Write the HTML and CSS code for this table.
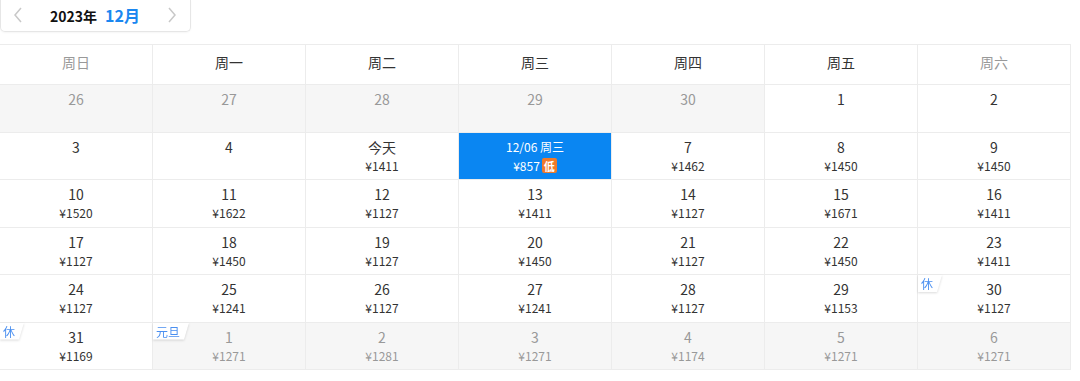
FILE: index.html
```html
<!DOCTYPE html>
<html lang="zh-CN">
<head>
<meta charset="utf-8">
<link rel="stylesheet" href="styles.css">
</head>
<body>
<div class="month-bar">
  <span class="nav"><svg width="10" height="16" viewBox="0 0 10 16"><polyline points="8,1 2,8 8,15" fill="none" stroke="#c8c8c8" stroke-width="1.5"/></svg></span>
  <span class="title"><span class="year">2023年</span><span class="month">12月</span></span>
  <span class="nav"><svg width="10" height="16" viewBox="0 0 10 16"><polyline points="2,1 8,8 2,15" fill="none" stroke="#c8c8c8" stroke-width="1.5"/></svg></span>
</div>

<div class="cal">
  <div class="wk weekend">周日</div>
  <div class="wk">周一</div>
  <div class="wk">周二</div>
  <div class="wk">周三</div>
  <div class="wk">周四</div>
  <div class="wk">周五</div>
  <div class="wk weekend">周六</div>

  <div class="cell off"><span class="d">26</span></div>
  <div class="cell off"><span class="d">27</span></div>
  <div class="cell off"><span class="d">28</span></div>
  <div class="cell off"><span class="d">29</span></div>
  <div class="cell off"><span class="d">30</span></div>
  <div class="cell"><span class="d">1</span></div>
  <div class="cell"><span class="d">2</span></div>

  <div class="cell"><span class="d">3</span></div>
  <div class="cell"><span class="d">4</span></div>
  <div class="cell"><span class="d">今天</span><span class="p">¥1411</span></div>
  <div class="cell sel"><span class="d">12/06 周三</span><span class="p">¥857<span class="low">低</span></span></div>
  <div class="cell"><span class="d">7</span><span class="p">¥1462</span></div>
  <div class="cell"><span class="d">8</span><span class="p">¥1450</span></div>
  <div class="cell"><span class="d">9</span><span class="p">¥1450</span></div>

  <div class="cell"><span class="d">10</span><span class="p">¥1520</span></div>
  <div class="cell"><span class="d">11</span><span class="p">¥1622</span></div>
  <div class="cell"><span class="d">12</span><span class="p">¥1127</span></div>
  <div class="cell"><span class="d">13</span><span class="p">¥1411</span></div>
  <div class="cell"><span class="d">14</span><span class="p">¥1127</span></div>
  <div class="cell"><span class="d">15</span><span class="p">¥1671</span></div>
  <div class="cell"><span class="d">16</span><span class="p">¥1411</span></div>

  <div class="cell"><span class="d">17</span><span class="p">¥1127</span></div>
  <div class="cell"><span class="d">18</span><span class="p">¥1450</span></div>
  <div class="cell"><span class="d">19</span><span class="p">¥1127</span></div>
  <div class="cell"><span class="d">20</span><span class="p">¥1450</span></div>
  <div class="cell"><span class="d">21</span><span class="p">¥1127</span></div>
  <div class="cell"><span class="d">22</span><span class="p">¥1450</span></div>
  <div class="cell"><span class="d">23</span><span class="p">¥1411</span></div>

  <div class="cell"><span class="d">24</span><span class="p">¥1127</span></div>
  <div class="cell"><span class="d">25</span><span class="p">¥1241</span></div>
  <div class="cell"><span class="d">26</span><span class="p">¥1127</span></div>
  <div class="cell"><span class="d">27</span><span class="p">¥1241</span></div>
  <div class="cell"><span class="d">28</span><span class="p">¥1127</span></div>
  <div class="cell"><span class="d">29</span><span class="p">¥1153</span></div>
  <div class="cell"><span class="tag-wrap"><span class="tag">休</span></span><span class="d">30</span><span class="p">¥1127</span></div>

  <div class="cell"><span class="tag-wrap"><span class="tag">休</span></span><span class="d">31</span><span class="p">¥1169</span></div>
  <div class="cell off"><span class="tag-wrap"><span class="tag">元旦</span></span><span class="d">1</span><span class="p">¥1271</span></div>
  <div class="cell off"><span class="d">2</span><span class="p">¥1281</span></div>
  <div class="cell off"><span class="d">3</span><span class="p">¥1271</span></div>
  <div class="cell off"><span class="d">4</span><span class="p">¥1174</span></div>
  <div class="cell off"><span class="d">5</span><span class="p">¥1271</span></div>
  <div class="cell off"><span class="d">6</span><span class="p">¥1271</span></div>
</div>
</body>
</html>
```

FILE: styles.css
```css
* { box-sizing: border-box; }
html, body { margin: 0; padding: 0; background: #fff; }
body {
  font-family: "Noto Sans CJK SC", "Open Sans", sans-serif;
  color: #333;
  width: 1080px;
  height: 381px;
  overflow: hidden;
}

.month-bar {
  width: 191px;
  height: 32px;
  border: 1px solid #e6e6e6;
  border-top: none;
  border-radius: 0 0 5px 5px;
  display: flex;
  align-items: center;
  justify-content: space-between;
  padding: 0 13px 2px 12px;
  box-shadow: 0 1px 2px rgba(0,0,0,0.04);
}
.nav { display: flex; align-items: center; }
.title { display: flex; align-items: baseline; gap: 8px; }
.year { font-size: 14px; font-weight: bold; color: #111; }
.month { font-size: 16px; font-weight: bold; color: #1a87f0; }

.cal {
  margin-top: 12px;
  width: 1071px;
  display: grid;
  grid-template-columns: repeat(7, 153px);
  grid-template-rows: 40px repeat(6, 47.5px);
  border-top: 1px solid #ececec;
}
.wk {
  border-right: 1px solid #ececec;
  border-bottom: 1px solid #ececec;
  display: flex;
  align-items: center;
  justify-content: center;
  padding-bottom: 5px;
  font-size: 14px;
  color: #333;
}
.wk.weekend { color: #999; }

.cell {
  position: relative;
  border-right: 1px solid #ececec;
  border-bottom: 1px solid #ececec;
  display: flex;
  flex-direction: column;
  align-items: center;
  padding-top: 4px;
}
.cell .d { font-size: 14px; line-height: 20px; color: #333; }
.cell .p { font-size: 12px; line-height: 16px; color: #333; display: flex; align-items: center; margin-top: 1px; }
.cell.off { background: #f6f6f6; }
.cell.off .d, .cell.off .p { color: #999; }

.cell.sel { background: #0a86f2; }
.cell.sel .d { font-size: 12px; color: #fff; }
.cell.sel .p { color: #fff; }
.low {
  display: inline-flex;
  align-items: center;
  justify-content: center;
  width: 15px;
  height: 15px;
  margin-left: 2px;
  background: #f07a2a;
  color: #fff;
  border-radius: 2px;
  font-size: 11px;
  font-weight: bold;
}

.tag-wrap {
  position: absolute;
  top: 0;
  left: 0;
  filter: drop-shadow(0 1px 1px rgba(0,0,0,0.14));
}
.tag {
  display: block;
  background: #fff;
  color: #4a8ff0;
  font-size: 12px;
  line-height: 17px;
  padding: 0 9px 0 3px;
  clip-path: polygon(0 0, 100% 0, calc(100% - 5px) 100%, 0 100%);
}
```
